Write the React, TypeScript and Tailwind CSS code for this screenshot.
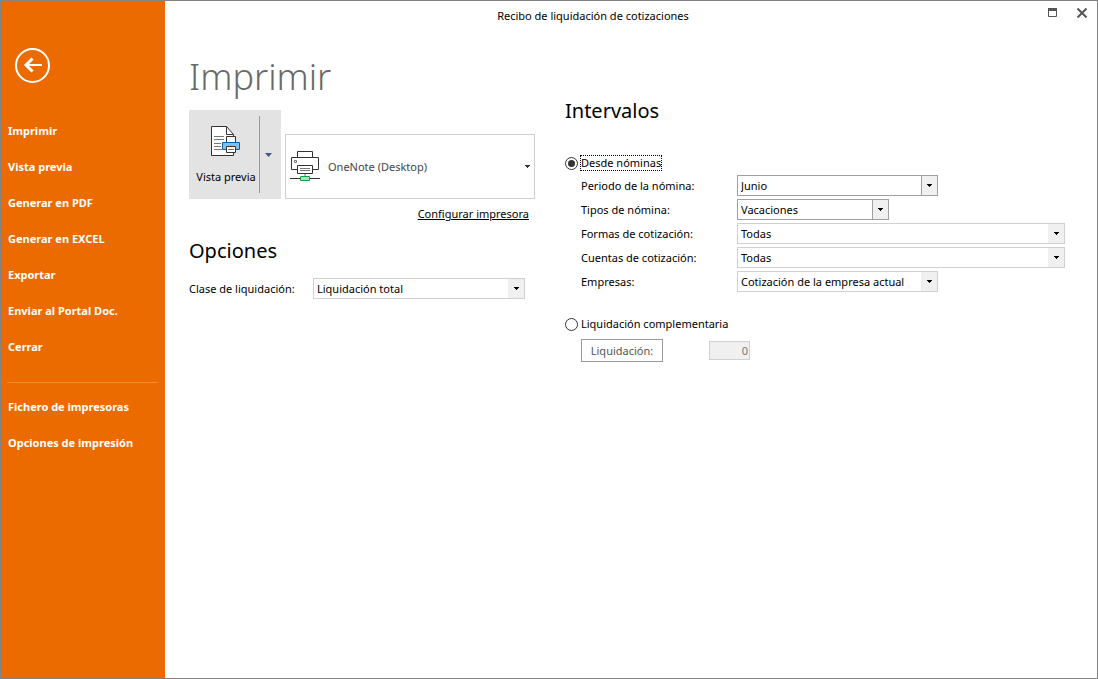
import { useId, useState } from "react";

const mainActions = [
  "Imprimir",
  "Vista previa",
  "Generar en PDF",
  "Generar en EXCEL",
  "Exportar",
  "Enviar al Portal Doc.",
  "Cerrar",
];
const extraActions = ["Fichero de impresoras", "Opciones de impresión"];

function Caret({ className = "" }: { className?: string }) {
  return (
    <svg className={className} width="5" height="3" viewBox="0 0 5 3" fill="currentColor" shapeRendering="crispEdges" aria-hidden="true">
      <path d="M0 0H5V1H0ZM1 1H4V2H1ZM2 2H3V3H2Z" />
    </svg>
  );
}

function PreviewIcon() {
  return (
    <svg width="30" height="31" viewBox="0 0 30 31" fill="none" aria-hidden="true">
      <path d="M.5 .5H15.5L22.5 8.5V29.5H.5Z" fill="#fff" stroke="#333" />
      <path d="M15.5 .5V8.5H22.5" stroke="#333" />
      <path d="M3 10.5H13M3 13.5H13M3 17.5H10M3 20.5H10M3 23.5H11" stroke="#777" />
      <path d="M15.5 16.5V10.5H24.5V16.5" fill="#fff" stroke="#333" />
      <path d="M11.5 16.5H28.5V23.5H11.5Z" fill="#83beec" stroke="#0063b1" />
      <path d="M15.5 20.5H24.5V26.5H15.5Z" fill="#fff" stroke="#333" />
      <path d="M17 23.5H23" stroke="#777" />
    </svg>
  );
}

function NetworkPrinterIcon() {
  return (
    <svg className="pointer-events-none col-start-1 row-start-1 ml-1" width="30" height="31" viewBox="0 0 30 31" fill="none" aria-hidden="true">
      <path d="M7.5 6.5V.5H22.5V6.5" stroke="#333" />
      <path d="M7.5 18.5H1.5V6.5H28.5V18.5H22.5" stroke="#333" />
      <path d="M4.5 9.5H6.5V11.5H4.5Z" stroke="#777" />
      <path d="M7.5 14.5H22.5V22.5H7.5Z" fill="#fff" stroke="#333" />
      <path d="M10 17.5H20M10 19.5H20" stroke="#777" />
      <path d="M15 23V26" stroke="#bbb" strokeWidth="2" />
      <path d="M0 27.5H30" stroke="#333" />
      <path d="M10.5 25.5H19.5V29.5H10.5Z" fill="#b8dcb8" stroke="#10a04a" />
    </svg>
  );
}

function Combo({ id, options, width, strong = false }: { id: string; options: string[]; width: string; strong?: boolean }) {
  return (
    <div className={`grid h-[21px] border ${strong ? "border-[#a0a0a0]" : "border-[#d0d0d0]"} ${width}`}>
      <select id={id} className="col-start-1 row-start-1 min-w-0 appearance-none bg-white pr-4 pl-[3px] outline-none">
        {options.map((o) => (
          <option key={o}>{o}</option>
        ))}
      </select>
      <span
        className={`pointer-events-none col-start-1 row-start-1 flex w-4 items-center justify-center justify-self-end bg-[#f0f0f0] ${
          strong ? "border-l border-[#a0a0a0]" : ""
        }`}
      >
        <Caret />
      </span>
    </div>
  );
}

function Field({ label, options, width, strong }: { label: string; options: string[]; width: string; strong?: boolean }) {
  const id = useId();
  return (
    <div className="flex items-center">
      <label htmlFor={id} className="w-[156px] shrink-0">
        {label}
      </label>
      <Combo id={id} options={options} width={width} strong={strong} />
    </div>
  );
}

const radioClass =
  "size-[13px] shrink-0 appearance-none rounded-full border border-[#333] bg-clip-content p-[2px] outline-none checked:bg-[#333]";

export default function App() {
  const [mode, setMode] = useState("nominas");

  return (
    <div className="flex min-h-screen border border-[#838383] bg-white font-['Noto_Sans','Open_Sans',sans-serif] text-[11px] leading-4 text-black">
      <nav className="flex w-41 shrink-0 flex-col bg-[#eb6b00] pt-[47px] text-white">
        <button type="button" aria-label="Volver" className="mb-[30px] ml-3.5 size-[35px]">
          <svg width="35" height="35" viewBox="0 0 35 35" fill="none" stroke="#fff" aria-hidden="true">
            <circle cx="17.5" cy="17.5" r="16.5" strokeWidth="2" />
            <path d="M27 17H11" strokeWidth="2" />
            <path d="M17.5 10.5L11 17L17.5 23.5" strokeWidth="3" />
          </svg>
        </button>
        {mainActions.map((a) => (
          <button key={a} type="button" className="h-9 pl-[7px] text-left font-bold">
            {a}
          </button>
        ))}
        <hr className="mt-[17px] mr-[7px] mb-1.5 ml-1.5 border-[#ef8c38]" />
        {extraActions.map((a) => (
          <button key={a} type="button" className="h-9 pl-[7px] text-left font-bold">
            {a}
          </button>
        ))}
      </nav>

      <div className="min-w-0 flex-1">
        <header className="flex h-[30px] items-center">
          <div className="flex-1 text-center">Recibo de liquidación de cotizaciones</div>
          <div className="flex w-[76px] items-center justify-end gap-5 pr-[10px] pb-[7px] text-[#555]">
            <button type="button" aria-label="Maximizar">
              <svg width="9" height="9" viewBox="0 0 9 9" fill="none" stroke="currentColor" aria-hidden="true">
                <path d="M.5 .5H8.500V8.500H.5Z" />
                <path d="M0 1.500H9" strokeWidth="3" />
              </svg>
            </button>
            <button type="button" aria-label="Cerrar ventana">
              <svg width="10" height="10" viewBox="0 0 10 10" fill="none" stroke="currentColor" strokeWidth="2" aria-hidden="true">
                <path d="M.5 .5L9.500 9.500M9.500 .5L.5 9.500" />
              </svg>
            </button>
          </div>
        </header>

        <main className="flex gap-[30px] pr-8 pl-6">
          <section className="w-[346px] shrink-0 pt-[22px]">
            <h1 className="mb-[9px] text-4xl leading-[48px] font-light text-[#6a6a6a]">Imprimir</h1>
            <div className="flex items-end gap-1">
              <div className="flex h-[89px] w-[92px] shrink-0 items-center bg-[#e3e3e3]">
                <button type="button" className="flex h-full flex-1 flex-col items-center gap-3 pt-4 pl-1 whitespace-nowrap">
                  <PreviewIcon />
                  Vista previa
                </button>
                <button
                  type="button"
                  aria-label="Más opciones de vista previa"
                  className="flex h-[77px] w-[22px] items-center border-l border-[#999] pl-[5px] text-[#44587f]"
                >
                  <svg width="7" height="4" viewBox="0 0 7 4" fill="currentColor" aria-hidden="true">
                    <path d="M0 0H7L3.500 4Z" />
                  </svg>
                </button>
              </div>
              <div className="grid h-[65px] flex-1 items-center border border-[#d0d0d0]">
                <select
                  aria-label="Impresora"
                  className="col-start-1 row-start-1 h-full appearance-none bg-white pl-[42px] text-[#444] outline-none"
                >
                  <option>OneNote (Desktop)</option>
                </select>
                <NetworkPrinterIcon />
                <Caret className="pointer-events-none col-start-1 row-start-1 mr-1 justify-self-end text-[#333]" />
              </div>
            </div>
            <div className="mt-[7px] pr-1.5 text-right">
              <a href="#impresora" className="underline">
                Configurar impresora
              </a>
            </div>
            <h2 className="mt-[13px] mb-[11px] text-xl leading-8">Opciones</h2>
            <div className="grid grid-cols-[124px_1fr] items-center">
              <label htmlFor="clase">Clase de liquidación:</label>
              <Combo id="clase" options={["Liquidación total"]} width="w-[212px]" />
            </div>
          </section>

          <section className="min-w-0 flex-1 pt-16">
            <h2 className="text-xl leading-8">Intervalos</h2>
            <label className="mt-7 flex h-4 items-center gap-0.5">
              <input type="radio" name="intervalo" className={radioClass} checked={mode === "nominas"} onChange={() => setMode("nominas")} />
              <span className="border border-dotted border-black leading-3.5">Desde nóminas</span>
            </label>
            <div className="mt-1 flex flex-col gap-[3px] pl-4">
              <Field label="Periodo de la nómina:" options={["Junio"]} width="w-[201px]" strong />
              <Field label="Tipos de nómina:" options={["Vacaciones"]} width="w-[152px]" strong />
              <Field label="Formas de cotización:" options={["Todas"]} width="flex-1" />
              <Field label="Cuentas de cotización:" options={["Todas"]} width="flex-1" />
              <Field label="Empresas:" options={["Cotización de la empresa actual"]} width="w-[201px]" />
            </div>
            <label className="mt-6 flex h-4 items-center gap-[3px]">
              <input
                type="radio"
                name="intervalo"
                className={radioClass}
                checked={mode === "complementaria"}
                onChange={() => setMode("complementaria")}
              />
              Liquidación complementaria
            </label>
            <div className="mt-[7px] flex items-center gap-[46px] pl-4">
              <button type="button" className="h-[23px] w-[82px] border border-[#999] text-[#555]">
                Liquidación:
              </button>
              <input
                aria-label="Número de liquidación"
                disabled
                defaultValue="0"
                className="h-[19px] w-[41px] border border-[#d0d0d0] bg-[#f0f0f0] pr-px text-right text-[#777]"
              />
            </div>
          </section>
        </main>
      </div>
    </div>
  );
}
